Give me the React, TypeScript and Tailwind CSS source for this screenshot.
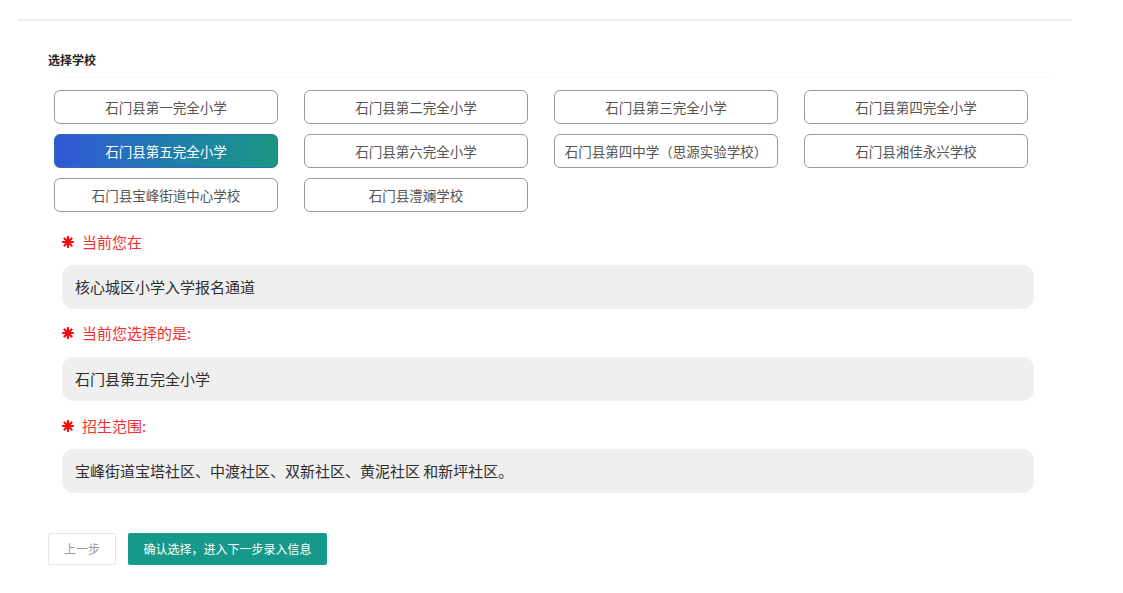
import React, { useState } from 'react';

const SCHOOLS = [
    '石门县第一完全小学',
    '石门县第二完全小学',
    '石门县第三完全小学',
    '石门县第四完全小学',
    '石门县第五完全小学',
    '石门县第六完全小学',
    '石门县第四中学（思源实验学校）',
    '石门县湘佳永兴学校',
    '石门县宝峰街道中心学校',
    '石门县澧斓学校',
];

const Star = () => (
    <svg width="12" height="12" viewBox="0 0 24 24" className="shrink-0">
        <g stroke="#f00f0f" strokeWidth="4.4" strokeLinecap="round">
            <line x1="12" y1="2" x2="12" y2="22" />
            <line x1="2" y1="12" x2="22" y2="12" />
            <line x1="4.9" y1="4.9" x2="19.1" y2="19.1" />
            <line x1="19.1" y1="4.9" x2="4.9" y2="19.1" />
        </g>
    </svg>
);

const Label: React.FC<{ text: string; className?: string }> = ({ text, className }) => (
    <div className={`flex items-center gap-[8px] h-[20px] ml-[44px] ${className ?? ''}`}>
        <Star />
        <span className="text-[15px] text-[#f23030]">{text}</span>
    </div>
);

const Field: React.FC<{ text: string; className?: string }> = ({ text, className }) => (
    <div className={`ml-[44px] w-[972px] h-[44px] rounded-[12px] bg-[#efefef] flex items-center px-[13px] text-[15px] text-[#2e2e2e] ${className ?? ''}`}>
        {text}
    </div>
);

export default function App() {
    const [selected, setSelected] = useState(4);

    return (
        <div className="w-full min-h-[593px] bg-white pt-[19px] pl-[18px]" style={{ fontFamily: '"Noto Sans CJK SC", "Noto Sans", sans-serif' }}>
            <div className="w-[1054px] border-t-2 border-[#efefef] pb-[20px]">
                <div className="ml-[30px] mt-[31px] text-[12px] font-bold text-[#222] leading-[16px]">选择学校</div>
                <div className="ml-[40px] mt-[9px] w-[996px] h-px bg-[#f8f8f8]" />

                <div className="ml-[36px] mt-[12px] w-[974px] grid grid-cols-4 gap-x-[26px] gap-y-[10px]">
                    {SCHOOLS.map((s, i) => (
                        <button
                            key={s}
                            onClick={() => setSelected(i)}
                            className={
                                i === selected
                                    ? 'h-[34px] rounded-[6px] border border-[#2e6db0] bg-gradient-to-r from-[#3355d6] to-[#1c9780] text-white text-[13.5px]'
                                    : 'h-[34px] rounded-[6px] border border-[#9a9a9a] bg-white text-[#555] text-[13.5px]'
                            }
                        >
                            {s}
                        </button>
                    ))}
                </div>

                <Label text="当前您在" className="mt-[20px]" />
                <Field text="核心城区小学入学报名通道" className="mt-[13px]" />

                <Label text="当前您选择的是:" className="mt-[14px]" />
                <Field text={SCHOOLS[selected]} className="mt-[14px]" />

                <Label text="招生范围:" className="mt-[15px]" />
                <Field text="宝峰街道宝塔社区、中渡社区、双新社区、黄泥社区 和新坪社区。" className="mt-[13px]" />

                <div className="ml-[30px] mt-[40px] flex gap-[12px]">
                    <button className="w-[68px] h-[32px] border border-[#e6e6e6] bg-white text-[12px] text-[#999] rounded-[2px]">上一步</button>
                    <button className="w-[199px] h-[32px] bg-[#16998a] text-[12px] text-white rounded-[2px]">确认选择，进入下一步录入信息</button>
                </div>
            </div>
        </div>
    );
}
